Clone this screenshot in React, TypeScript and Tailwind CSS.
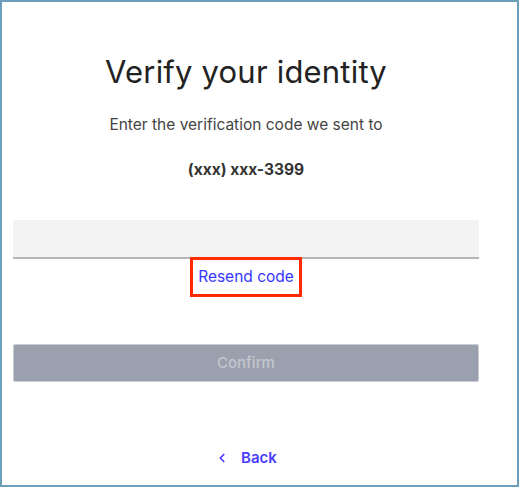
import { ChevronLeft } from "lucide-react";

export default function App() {
  return (
    <div className="w-[520px] h-[488px] bg-white font-['Inter',sans-serif]">
      <div className="w-[519px] h-[487px] border-2 border-[#6d9fba] bg-white">
        <div className="w-[466px] ml-[11px] flex flex-col items-center">
          {/* heading */}
          <h1 className="mt-[50px] text-[31px] leading-[40px] text-[#222] tracking-[0.2px]">
            Verify your identity
          </h1>
          <p className="mt-[23px] text-[15.5px] leading-5 text-[#444]">
            Enter the verification code we sent to
          </p>
          <p className="mt-[25px] text-[15.5px] leading-5 font-bold text-[#333]">(xxx) xxx-3399</p>

          {/* code input */}
          <div className="mt-[40px] w-full h-[39px] bg-[#f3f3f3] border-b-2 border-[#b5b5b5]" />

          <div className="mt-[-2px] px-[5px] py-[4px] border-[3px] border-[#ff2a00]">
            <span className="block text-[15.5px] leading-[26px] text-[#3535ff]">Resend code</span>
          </div>

          {/* confirm */}
          <button className="mt-[47px] w-full h-[38px] rounded-[2px] bg-[#9aa0ae] border border-[#c9ccd3] text-[15px] font-medium text-[#c3c6ce]">
            Confirm
          </button>

          <a className="mt-[65px] flex items-center gap-[12px] text-[#4a3cff] font-semibold text-[15px]">
            <ChevronLeft size={14} strokeWidth={3} />
            Back
          </a>
        </div>
      </div>
    </div>
  );
}
